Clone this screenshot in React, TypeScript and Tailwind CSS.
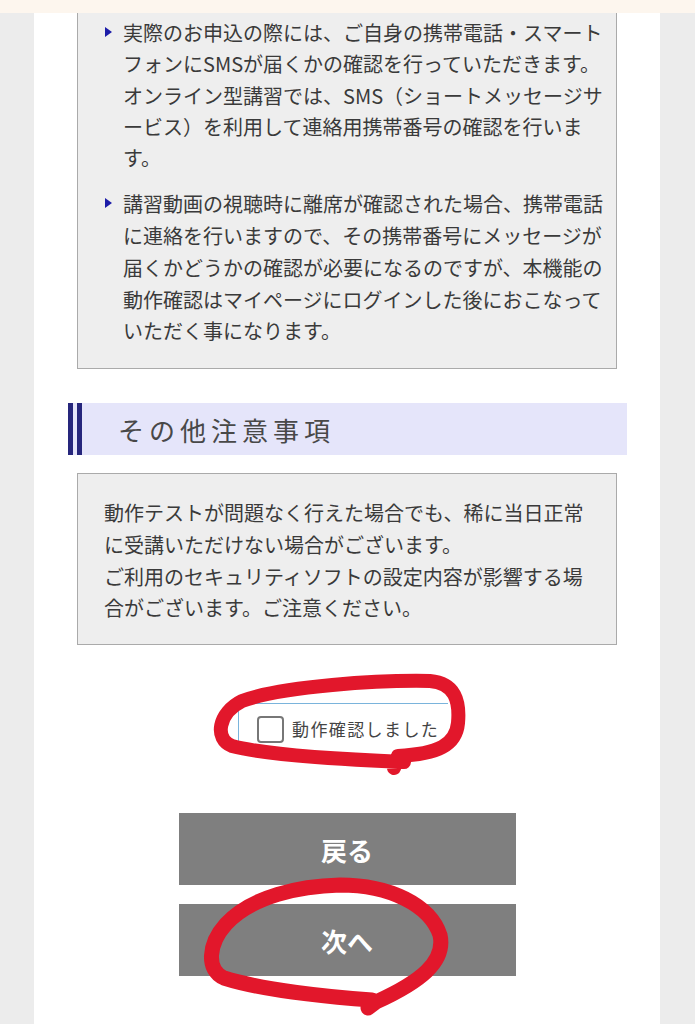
import React from "react";

const font = { fontFamily: '"Noto Sans CJK JP", "Noto Sans", sans-serif' };

function Bullet() {
  return (
    <span className="absolute left-[27px] top-[10px] w-0 h-0 border-y-[5.5px] border-y-transparent border-l-[7px] border-l-[#1c1ca8]" />
  );
}

function Marks() {
  return (
    <svg
      className="absolute inset-0 pointer-events-none"
      width="695"
      height="1024"
      viewBox="0 0 695 1024"
      fill="none"
    >
      <path
        d="M 404 762 C 330 759, 262 754, 232 746 C 214 739, 218 713, 242 701 C 282 686, 380 680, 430 681 C 455 683, 460 701, 458 723 C 456 745, 438 754, 398 756 L 394 768"
        stroke="#e2172b"
        strokeWidth="14"
        strokeLinecap="round"
        strokeLinejoin="round"
      />
      <path
        d="M 372 1000 C 330 997, 262 990, 224 978 C 206 970, 208 944, 226 924 C 252 896, 300 886, 340 885 C 390 885, 430 905, 440 935 C 446 962, 420 982, 376 1002 L 368 1008"
        stroke="#e2172b"
        strokeWidth="15"
        strokeLinecap="round"
        strokeLinejoin="round"
      />
    </svg>
  );
}

export default function App() {
  return (
    <div
      className="relative w-[695px] h-[1024px] overflow-hidden bg-[#ececec] text-[#3a3a3a]"
      style={font}
    >
      <div className="h-[13px] bg-[#fdf6ee]" />
      <div className="ml-[34px] w-[626px] h-[1011px] bg-white">
        {/* notes box */}
        <div className="ml-[43px] w-[540px] bg-[#eeeeee] border border-t-0 border-[#aaaaaa] pt-[4px] pb-[21px] pr-[8px]">
          <div className="relative pl-[45px] text-[20px] leading-[31.25px] whitespace-nowrap">
            <Bullet />
            実際のお申込の際には、ご自身の携帯電話・スマート
            <br />
            フォンにSMSが届くかの確認を行っていただきます。
            <br />
            オンライン型講習では、SMS（ショートメッセージサ
            <br />
            ービス）を利用して連絡用携帯番号の確認を行いま
            <br />
            す。
          </div>
          <div className="relative pl-[45px] mt-[15px] text-[20px] leading-[31.75px] whitespace-nowrap">
            <Bullet />
            講習動画の視聴時に離席が確認された場合、携帯電話
            <br />
            に連絡を行いますので、その携帯番号にメッセージが
            <br />
            届くかどうかの確認が必要になるのですが、本機能の
            <br />
            動作確認はマイページにログインした後におこなって
            <br />
            いただく事になります。
          </div>
        </div>

        {/* heading */}
        <div className="ml-[34px] mt-[34px] w-[559px] h-[52px] bg-[#e5e5fa] flex items-center">
          <div className="w-[5px] h-full bg-[#26267c]" />
          <div className="w-[5px] h-full bg-[#26267c] ml-[4px]" />
          <h2 className="ml-[36px] text-[26px] tracking-[5px] text-[#484848] font-normal">
            その他注意事項
          </h2>
        </div>

        {/* other notes */}
        <div className="ml-[43px] mt-[18px] w-[540px] bg-[#eeeeee] border border-[#aaaaaa] pt-[23px] pb-[20px] pl-[26px] text-[20px] leading-[31.75px] whitespace-nowrap">
          動作テストが問題なく行えた場合でも、稀に当日正常
          <br />
          に受講いただけない場合がございます。
          <br />
          ご利用のセキュリティソフトの設定内容が影響する場
          <br />
          合がございます。ご注意ください。
        </div>

        {/* confirm checkbox */}
        <div className="mt-[58px] ml-[204px] w-[210px] h-[38px] border-t border-l border-[#7ab4dc] flex items-center pl-[18px]">
          <span className="w-[27px] h-[27px] rounded-[4px] border-2 border-[#777] bg-white mt-[14px]" />
          <span className="ml-[8px] mt-[12px] text-[17px] tracking-[1.4px] text-[#444]">
            動作確認しました
          </span>
        </div>

        {/* buttons */}
        <div className="mt-[72px] flex flex-col items-center gap-[19px]">
          <button className="w-[337px] h-[72px] bg-[#7f7f7f] text-white text-[26px] font-bold">
            戻る
          </button>
          <button className="w-[337px] h-[72px] bg-[#7f7f7f] text-white text-[26px] font-bold">
            次へ
          </button>
        </div>
      </div>
      <Marks />
    </div>
  );
}
